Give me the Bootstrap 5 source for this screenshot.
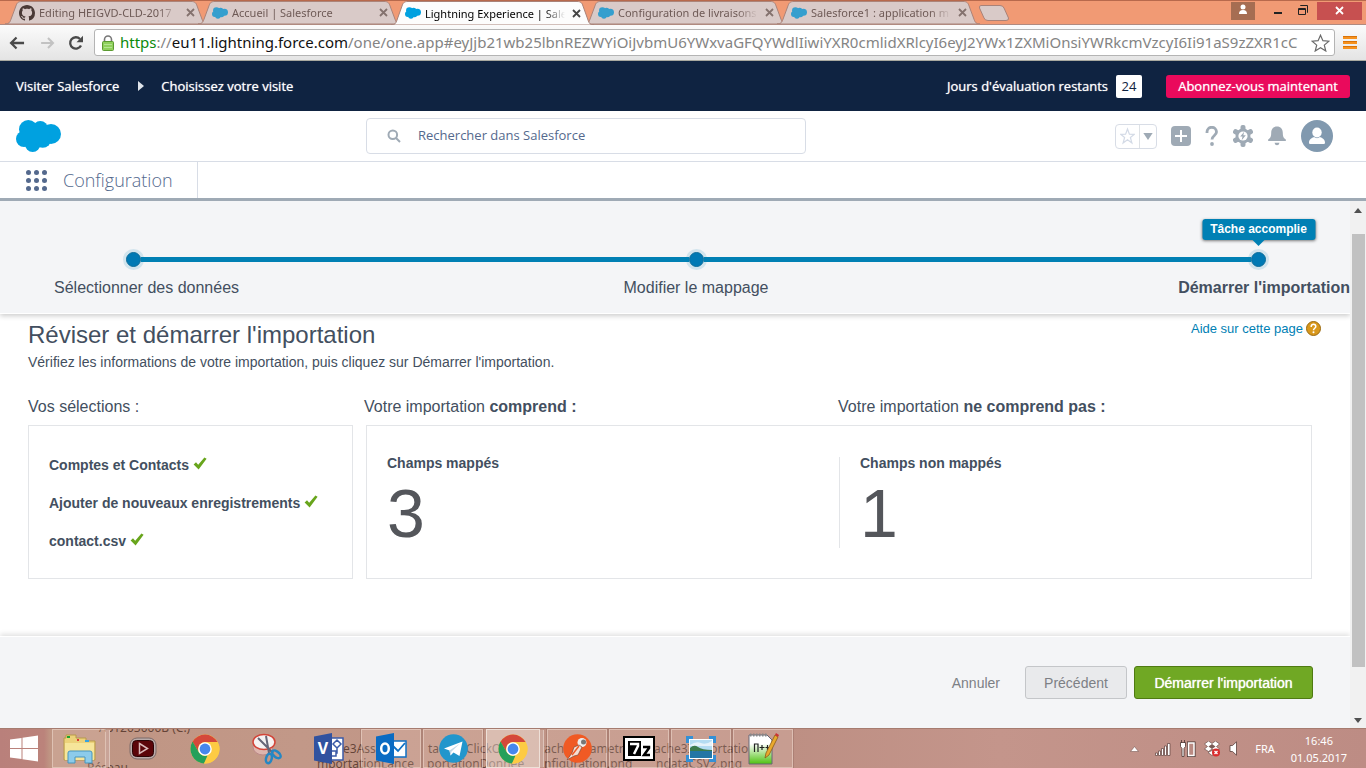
<!DOCTYPE html>
<html lang="fr">
<head>
<meta charset="utf-8">
<meta name="viewport" content="width=device-width, initial-scale=1">
<title>Lightning Experience | Salesforce</title>
<link href="https://cdn.jsdelivr.net/npm/bootstrap@5.3.0/dist/css/bootstrap.min.css" rel="stylesheet">
<style>
:root{--navy:#0f2341;--sf-blue:#00a1e0;--step:#0080b4;--ink:#434f60;--line:#d8dde6;--grey:#9faab5}
body{font-family:"Liberation Sans",Arial,sans-serif;font-size:14px;line-height:20px;color:var(--ink);background:#fff}
svg{display:block;flex:none}
button{border:0;padding:0;background:none;color:inherit}
a{text-decoration:none}
.ui-font{font-family:"Open Sans","Noto Sans",sans-serif}
.sys-font{font-family:"Noto Sans","Open Sans",sans-serif}

/* browser window */
.tabstrip{height:25px;background:#f19a74;border-top:1px solid #b8694c;border-bottom:1px solid #b08a80}
.tabs-row{padding-left:5px}
.btab{width:203px;height:23px;margin-right:-10px;padding:0 12px 0 14px;font-size:11px;line-height:23px;color:#6e5a56;position:relative}
.btab .shape{position:absolute;inset:0;width:100%;height:23px}
.btab > *{position:relative}
.btab .ttl{width:140px;margin-left:4px;color:inherit;white-space:nowrap;overflow:hidden;-webkit-mask-image:linear-gradient(90deg,#000 85%,transparent);mask-image:linear-gradient(90deg,#000 85%,transparent)}
.btab .closer{margin-left:7px;color:#84726e}
.btab.current{color:#000;z-index:2;height:24px}
.btab.current .closer{color:#444}
.btab.current .shape{height:24px}
.wbtn{height:19px}
.toolbar{height:36px;background:linear-gradient(#fbfbfb,#e4e4e4);border-bottom:1px solid #a9a9a0;padding:0 9px}
.address{height:27px;border:1px solid #b4b4b4;border-radius:3px;background:#fff;font-size:15px;line-height:25px;color:#848484;min-width:0;margin-left:10px;padding:0 4px 0 7px}
.address [role=textbox]{white-space:nowrap;overflow:hidden;outline:0;min-width:0;margin-left:6px}

/* salesforce chrome */
.tour{height:50px;background:var(--navy);color:#fff;padding:0 16px;font-size:13px;text-shadow:0 0 1px rgba(255,255,255,.8)}
.tour a{color:#fff}
.tour svg{margin:0 16px 0 18px}
.days{background:#fff;color:var(--navy);border-radius:2px;height:23px;width:26px;line-height:23px;text-shadow:none}
.subscribe{height:23px;width:184px;background:#ea0a5c;border-radius:3px;color:#fff;text-shadow:inherit}
.apphead{height:51px;border-bottom:1px solid var(--line);padding:0 33px 0 16px}
.logo{width:350px}
.tools{gap:14px}
.finder{width:440px;height:36px;border:1px solid var(--line);border-radius:4px;padding-left:20px}
.finder input{border:0;outline:0;font-size:13px;line-height:16px;color:#54698d;margin-left:16px;padding:0 2px 2px 1px}
.finder input::placeholder{color:#54698d;opacity:1}
.favs{border:1px solid var(--line);border-radius:4px;height:25px;width:42px}
.appnav{height:39px;border-bottom:3px solid var(--grey)}
.appnav .where{width:198px;border-right:1px solid var(--line);padding-left:26px;font-size:18px;font-weight:300;color:#54698d}

/* import wizard */
.band{background:#f4f5f7}
.steps{height:113px;border-bottom:1px solid #fff;box-shadow:0 2px 5px rgba(0,0,0,.2);padding-top:51px;position:relative}
.track{margin:0 84px 0 126px;height:15px}
.dot{width:15px;height:15px;border-radius:50%;background:#0079b4;border:1px solid #0b6c9a;box-shadow:0 0 0 3px rgba(0,128,180,.14);position:relative;z-index:1}
.seg{height:5px;background:var(--step)}
.tip{position:absolute;left:50%;bottom:26px;transform:translateX(-50%);background:var(--step);color:#fff;font-size:12px;font-weight:700;line-height:20px;height:21px;width:113px;padding-bottom:1px;bottom:18px;margin-bottom:8px;bottom:18px;text-align:center;border-radius:3px;box-shadow:0 1px 3px rgba(0,0,0,.5)}
.tip::after{content:"";position:absolute;left:50%;top:100%;margin-left:-6px;border:6px solid transparent;border-top-color:var(--step);border-bottom:0}
.names{display:grid;grid-template-columns:1fr auto 1fr;margin:11px 0 0 42px;padding-left:12px;font-size:16px;line-height:20px}
.names > :nth-child(2){margin-left:-12px}
.review{padding:7px 38px 0 28px}
.review h1{font-size:24px;line-height:28px;font-weight:400;margin:0 0 3px}
.help{color:var(--step);font-size:13px;line-height:16px;margin-right:-9px}
.help svg{margin-left:3px}
.sheet{display:grid;grid-template-columns:325px 1fr;column-gap:13px;margin-top:25px}
.sheet h2{font-size:16px;line-height:20px;font-weight:400;margin:0 0 8px}
.heads{margin-left:-2px}
.panel{border:1px solid #e3e5e8;height:154px}
.picks{padding:29px 20px;font-weight:700}
.picks li{height:38px}
.count{padding:0 20px;height:91px;line-height:14px}
.count b{display:block;line-height:12px}
.count + .count{border-left:1px solid #e3e5e8}
.count output{display:block;font-size:68px;line-height:68px;color:#54565b;margin-top:10px}
.actions{height:92px;border-top:1px solid #fff;box-shadow:0 -2px 5px rgba(0,0,0,.12);padding-right:37px}
.act{height:33px;border-radius:3px;font-size:14px;color:#7d8085}
.prev{width:102px;background:#e9eaec;border:1px solid #c4c6c9;margin:0 7px 0 25px}
.act.go{width:179px;background:#70a824;border:1px solid #4f7a12;color:#fff;text-shadow:0 0 1px #fff}
.vbar{width:16px;background:#f1f1f1;padding:7px 0 5px}
.vbar .thumb{width:13px;background:#c1c1c1;height:84%;margin-top:21px}

/* taskbar */
.taskbar{height:40px;background:linear-gradient(90deg,#b9807b 0,#bb837b 44px,#bf9583 50px,#c29888 300px,#bd8f83 780px,#c4958b 1000px,#bd8c84);border-top:1px solid #a67c70;position:relative;overflow:hidden}
.start{width:50px;padding-left:10px}
.slot{width:62px;height:39px;position:relative}
.slot.open{border:1px solid rgba(255,240,230,.4);background:rgba(255,230,215,.16);width:60px;margin:0 1px;box-shadow:0 0 0 1px rgba(120,80,70,.25)}
.slot.stack{width:54px;margin:0 6px 0 2px;box-shadow:4px 0 0 -1px #c9a498,5px 0 0 -1px #ddc4ba}
.slot.front{background:rgba(255,245,238,.42);border-color:#eee0d8}
.ghost{position:absolute;font-size:12px;line-height:16px;color:rgba(60,30,20,.7);white-space:nowrap}
.tray{color:#fff;font-size:11px;line-height:17px;padding-right:19px}
</style>
</head>
<body class="d-flex flex-column min-vh-100">

<svg width="0" height="0" class="position-absolute" aria-hidden="true">
  <symbol id="cloud" viewBox="0 0 135 96"><circle cx="37" cy="28" r="28"/><circle cx="73" cy="26" r="23"/><circle cx="105" cy="42" r="30"/><circle cx="24" cy="57" r="24"/><circle cx="50" cy="73" r="23"/><circle cx="80" cy="57" r="26"/><path d="M30 20h70v30l-40 20-30-5z"/></symbol>
  <symbol id="tabshape" viewBox="0 0 203 24" preserveAspectRatio="none"><path d="M0 24C4 24 5 22 6 19L11 5C12 2 13 .5 17 .5H186C190 .5 191 2 192 5L197 19C198 22 199 24 203 24Z"/></symbol>
  <symbol id="cross" viewBox="0 0 9 9"><path d="M1 1l7 7M8 1l-7 7" stroke="currentColor" stroke-width="1.8"/></symbol>
  <symbol id="tick" viewBox="0 0 14 13"><path d="M.6 7.500L3 5.200 5.200 7.800 11.400 .4 13.600 1.800 5.600 12.400Z" fill="#68a51c"/></symbol>
  <symbol id="chrome" viewBox="0 0 30 30"><circle cx="15" cy="15" r="14.5" fill="#fc4"/><path d="M2.5 7.7A14.5 14.5 0 0 1 27.6 8H15a7 7 0 0 0-6.2 10.200Z" fill="#d5483a"/><path d="M2.500 7.600L9 18.500A7 7 0 0 0 17.500 21.500L14 29.500A14.500 14.500 0 0 1 2.500 7.600Z" fill="#25a05a"/><path d="M27.600 8H15a7 7 0 0 1 6 10.500L14 29.500A14.500 14.500 0 0 0 27.600 8Z" fill="#fdcb43"/><circle cx="15" cy="15" r="6.800" fill="#fff"/><circle cx="15" cy="15" r="5.400" fill="#4787ed"/></symbol>
</svg>

<header class="sys-font">
  <div class="tabstrip d-flex align-items-start">
    <nav class="tabs-row d-flex" aria-label="Onglets">
      <div class="btab d-flex align-items-center"><svg class="shape" fill="#d9cac8" stroke="#a98278"><use href="#tabshape"/></svg>
        <svg width="16" height="16" viewBox="0 0 16 16" fill="#4b3a36"><path d="M8 0C3.580 0 0 3.580 0 8c0 3.540 2.290 6.530 5.470 7.590.4.070.55-.17.55-.38 0-.19-.01-.82-.01-1.490-2.010.37-2.530-.49-2.690-.94-.09-.23-.48-.94-.82-1.130-.28-.15-.68-.52-.01-.53.63-.01 1.080.58 1.230.82.72 1.210 1.870.87 2.330.66.07-.52.28-.87.51-1.070-1.780-.2-3.640-.89-3.640-3.950 0-.87.31-1.590.82-2.150-.08-.2-.36-1.020.08-2.120 0 0 .67-.21 2.200.82.64-.18 1.320-.27 2-.27s1.360.09 2 .27c1.530-1.040 2.200-.82 2.200-.82.44 1.100.16 1.920.08 2.120.51.56.82 1.270.82 2.150 0 3.070-1.870 3.750-3.650 3.950.29.25.54.73.54 1.480 0 1.070-.01 1.930-.01 2.200 0 .21.15.46.55.38A8.010 8.010 0 0 0 16 8c0-4.420-3.580-8-8-8z"/></svg>
        <a href="#" class="ttl">Editing HEIGVD-CLD-2017</a><button class="closer" aria-label="Fermer"><svg width="9" height="9"><use href="#cross"/></svg></button></div>
      <div class="btab d-flex align-items-center"><svg class="shape" fill="#d9cac8" stroke="#a98278"><use href="#tabshape"/></svg>
        <svg width="16" height="12" fill="#359fce"><use href="#cloud"/></svg><a href="#" class="ttl">Accueil | Salesforce</a><button class="closer" aria-label="Fermer"><svg width="9" height="9"><use href="#cross"/></svg></button></div>
      <div class="btab current d-flex align-items-center"><svg class="shape" fill="#fcfcfc" stroke="#a98278"><use href="#tabshape"/></svg>
        <svg width="16" height="12" fill="#00a1e0"><use href="#cloud"/></svg><a href="#" class="ttl">Lightning Experience | Sale</a><button class="closer" aria-label="Fermer"><svg width="9" height="9"><use href="#cross"/></svg></button></div>
      <div class="btab d-flex align-items-center"><svg class="shape" fill="#d9cac8" stroke="#a98278"><use href="#tabshape"/></svg>
        <svg width="16" height="12" fill="#359fce"><use href="#cloud"/></svg><a href="#" class="ttl">Configuration de livraisons</a><button class="closer" aria-label="Fermer"><svg width="9" height="9"><use href="#cross"/></svg></button></div>
      <div class="btab d-flex align-items-center"><svg class="shape" fill="#d9cac8" stroke="#a98278"><use href="#tabshape"/></svg>
        <svg width="16" height="12" fill="#359fce"><use href="#cloud"/></svg><a href="#" class="ttl">Salesforce1 : application m</a><button class="closer" aria-label="Fermer"><svg width="9" height="9"><use href="#cross"/></svg></button></div>
      <button class="ms-2 align-self-center" aria-label="Nouvel onglet"><svg width="32" height="16" viewBox="0 0 32 16"><path d="M3 .5H22Q25 .5 26 3L30.500 13Q31 15.500 28 15.500H10Q7 15.500 6 13L1.500 3Q1 .5 3 .5Z" fill="#d9cac8" stroke="#a98278"/></svg></button>
    </nav>
    <div class="d-flex ms-auto">
      <button class="wbtn" aria-label="Profil"><svg width="24" height="18" viewBox="0 0 24 18"><path fill="#a66d52" d="M0 0h24v18H0z"/><circle cx="12" cy="5" r="2.500" fill="#fff"/><path fill="#fff" d="M8 12q0-4 4-4t4 4z"/></svg></button>
      <button class="wbtn ms-3" aria-label="Réduire"><svg width="14" height="18" viewBox="0 0 14 18"><path fill="#222" d="M3 10h8v2H3z"/></svg></button>
      <button class="wbtn ms-2 ps-1" aria-label="Restaurer"><svg width="12" height="18" viewBox="0 0 12 18" fill="none" stroke="#222"><path d="M1.500 6.500h7v6h-7zM1 7.500h8M3.500 4V3.500h7v7H10"/></svg></button>
      <button class="wbtn ms-2 me-1" aria-label="Fermer la fenêtre"><svg width="45" height="18" viewBox="0 0 45 18"><path fill="#c75050" d="M0 0h45v18H0z"/><path d="M19 5l7 7M26 5l-7 7" stroke="#fff" stroke-width="1.800"/></svg></button>
    </div>
  </div>
  <div class="toolbar d-flex align-items-center">
    <button aria-label="Précédent"><svg width="16" height="14" viewBox="0 0 17 14" fill="none" stroke="#4a4a4a" stroke-width="2.400"><path d="M16 7H2.500M8 1.200L2.200 7 8 12.800"/></svg></button>
    <button class="ms-3 me-3" aria-label="Suivant"><svg width="14" height="12" viewBox="0 0 16 14" fill="none" stroke="#c2c2c2" stroke-width="2.400"><path d="M0 7h13.500M8 1.200L13.800 7 8 12.800"/></svg></button>
    <button style="margin-left:-3px" aria-label="Actualiser"><svg width="16" height="16" viewBox="0 0 16 16"><path d="M13 10.500A5.700 5.700 0 1 1 12 4" fill="none" stroke="#4a4a4a" stroke-width="2.300"/><path d="M15 .8v6.500H8.500z" fill="#4a4a4a"/></svg></button>
    <div class="address d-flex align-items-center flex-grow-1">
      <svg width="12" height="16" viewBox="0 0 12 16"><path d="M2.500 7V4.500a3.500 3.500 0 0 1 7 0V7" fill="none" stroke="#777" stroke-width="1.600"/><rect x=".5" y="6.500" width="11" height="9" rx="1" fill="#8fd05c" stroke="#5b9a31"/><path d="M2 9.500h8M2 12.500h8" stroke="#b4e592"/></svg>
      <div role="textbox" aria-label="Adresse" contenteditable="true" spellcheck="false" class="flex-grow-1"><span style="color:#0b8a0b">https</span>://<span style="color:#111">eu11.lightning.force.com</span>/one/one.app#eyJjb21wb25lbnREZWYiOiJvbmU6YWxvaGFQYWdlIiwiYXR0cmlidXRlcyI6eyJ2YWx1ZXMiOnsiYWRkcmVzcyI6Ii91aS9zZXR1cC</div>
      <button aria-label="Favori"><svg width="19" height="18" viewBox="0 0 19 18"><path d="M9.500 1.200l2.400 5.500 6 .5-4.600 3.900 1.500 5.900-5.300-3.200L4.200 17l1.500-5.900L1.100 7.200l6-.5z" fill="#fff" stroke="#6a6a6a" stroke-width="1.200"/></svg></button>
    </div>
    <button class="ms-2" aria-label="Menu"><svg width="14" height="13" viewBox="0 0 14 13"><path fill="#f6921e" d="M0 0h14v3H0zM0 5h14v3H0zM0 10h14v3H0z"/><path fill="#d9730a" d="M0 0h14v1H0zM0 5h14v1H0zM0 10h14v1H0z"/></svg></button>
  </div>
</header>

<div class="tour ui-font d-flex align-items-center">
  <a href="#">Visiter Salesforce</a>
  <svg width="8" height="10" viewBox="0 0 8 10" fill="#dfe4ea"><path d="M1 0l6 5-6 5z"/></svg>
  <a href="#">Choisissez votre visite</a>
  <span class="ms-auto me-2">Jours d'évaluation restants</span>
  <span class="days text-center">24</span>
  <button class="subscribe ms-4">Abonnez-vous maintenant</button>
</div>

<div class="apphead ui-font d-flex align-items-center">
  <div class="logo"><svg width="45" height="32" fill="#00a1e0"><use href="#cloud"/></svg></div>
  <label class="finder d-flex align-items-center"><svg width="14" height="14" viewBox="0 0 14 14" fill="none" stroke="#9faab5" stroke-width="2"><circle cx="5.800" cy="5.800" r="4.300"/><path d="M9 9l4 4"/></svg>
    <input type="text" class="ui-font flex-grow-1" placeholder="Rechercher dans Salesforce" aria-label="Rechercher dans Salesforce"></label>
  <div class="tools d-flex align-items-center ms-auto">
    <div class="favs d-flex align-items-center">
      <button class="ps-1 pe-1 border-end" aria-label="Favoris"><svg width="15" height="23" viewBox="0 0 15 23"><path d="M7.500 4l1.900 5.200 5 .1-4 3.200 1.500 5.500-4.400-3.200L3.100 18l1.500-5.500-4-3.200 5-.1z" fill="#fff" stroke="#d3dae6" stroke-width="1.200"/></svg></button>
      <button class="flex-grow-1 d-flex justify-content-center" aria-label="Liste des favoris"><svg width="10" height="7" viewBox="0 0 8 6"><path d="M0 0h8L4 6z" fill="#9faab5"/></svg></button>
    </div>
    <button aria-label="Créer"><svg width="20" height="20" viewBox="0 0 20 20"><rect width="20" height="20" rx="4" fill="#9faab5"/><path d="M10 4v12M4 10h12" stroke="#fff" stroke-width="2"/></svg></button>
    <button aria-label="Aide"><svg width="14" height="20" viewBox="0 0 14 20"><path d="M2 7V6a4.700 4.700 0 0 1 9.500 0c0 3.500-4.500 3.500-4.500 7.500" fill="none" stroke="#9faab5" stroke-width="2.800"/><circle cx="7" cy="18" r="1.900" fill="#9faab5"/></svg></button>
    <button aria-label="Configuration"><svg width="20" height="22" viewBox="0 0 20 22" fill="#9faab5"><circle cx="10" cy="11" r="7.500"/><rect x="7.500" y="0" width="5" height="22" rx="2"/><rect x="7.500" y="0" width="5" height="22" rx="2" transform="rotate(60 10 11)"/><rect x="7.500" y="0" width="5" height="22" rx="2" transform="rotate(120 10 11)"/><circle cx="10" cy="11" r="4.600" fill="#fff"/><path d="M11.200 6.800L7.200 11.500h2.300L8.700 15.200l4.100-4.900h-2.500z"/></svg></button>
    <button aria-label="Notifications"><svg width="20" height="20" viewBox="0 0 20 20" fill="#9faab5"><path d="M10 .5C6.300.5 4.200 3 4.200 6.800c0 4-.9 5.200-2.700 6.400-.8.600-.7 1.800.3 1.800h16.400c1 0 1.100-1.200.3-1.800-1.800-1.200-2.700-2.400-2.700-6.400C15.800 3 13.700.5 10 .5zM7.500 16.800h5q-.5 2.500-2.500 2.500t-2.500-2.500z"/></svg></button>
    <button aria-label="Profil utilisateur"><svg width="32" height="32" viewBox="0 0 32 32"><circle cx="16" cy="16" r="16" fill="#8199af"/><ellipse cx="16" cy="12.500" rx="4.700" ry="5" fill="#fff"/><path d="M8 22.500c0-3 2.500-4.500 5-5.500 2 1.500 4 1.500 6 0 2.500 1 5 2.500 5 5.500 0 1-.6 1.500-1.500 1.500h-13C8.600 24 8 23.500 8 22.500z" fill="#fff"/></svg></button>
  </div>
</div>

<nav class="appnav d-flex ui-font">
  <div class="where d-flex align-items-center"><button aria-label="Lanceur d'applications"><svg width="21" height="21" viewBox="0 0 21 21" fill="#54698d"><circle cx="2.500" cy="2.500" r="2.500"/><circle cx="10.500" cy="2.500" r="2.500"/><circle cx="18.500" cy="2.500" r="2.500"/><circle cx="2.500" cy="10.500" r="2.500"/><circle cx="10.500" cy="10.500" r="2.500"/><circle cx="18.500" cy="10.500" r="2.500"/><circle cx="2.500" cy="18.500" r="2.500"/><circle cx="10.500" cy="18.500" r="2.500"/><circle cx="18.500" cy="18.500" r="2.500"/></svg></button><span class="ms-3">Configuration</span></div>
</nav>

<div class="d-flex flex-grow-1">
  <main class="d-flex flex-column flex-grow-1 overflow-hidden">
    <section class="steps band">
      <div class="track d-flex align-items-center">
        <span class="dot"></span><span class="seg flex-grow-1"></span><span class="dot"></span><span class="seg flex-grow-1"></span><span class="dot"><span class="tip">Tâche accomplie</span></span>
      </div>
      <div class="names"><span>Sélectionner des données</span><span>Modifier le mappage</span><strong class="text-end">Démarrer l'importation</strong></div>
    </section>
    <section class="review flex-grow-1">
      <div class="d-flex justify-content-between">
        <div><h1>Réviser et démarrer l'importation</h1><p class="mb-0">Vérifiez les informations de votre importation, puis cliquez sur Démarrer l'importation.</p></div>
        <a href="#" class="help d-flex align-self-start"><span>Aide sur cette page</span><svg width="15" height="15" viewBox="0 0 15 15"><circle cx="7.500" cy="7.500" r="7" fill="#d9981c" stroke="#9a6a10"/><path d="M5.200 6V5.500a2.300 2.300 0 0 1 4.600 0C9.800 7.300 7.500 7.200 7.500 9.200" fill="none" stroke="#fff" stroke-width="1.500"/><circle cx="7.500" cy="11.300" r="1" fill="#fff"/></svg></a>
      </div>
      <div class="sheet">
        <div><h2>Vos sélections :</h2>
          <ul class="panel picks list-unstyled mb-0"><li>Comptes et Contacts <svg class="d-inline-block align-baseline" width="14" height="13"><use href="#tick"/></svg></li><li>Ajouter de nouveaux enregistrements <svg class="d-inline-block align-baseline" width="14" height="13"><use href="#tick"/></svg></li><li>contact.csv <svg class="d-inline-block align-baseline" width="14" height="13"><use href="#tick"/></svg></li></ul></div>
        <div><div class="heads d-flex"><h2 class="w-50">Votre importation <b>comprend :</b></h2><h2 class="w-50">Votre importation <b>ne comprend pas :</b></h2></div>
          <div class="panel d-flex align-items-center"><div class="count w-50"><b>Champs mappés</b><output>3</output></div><div class="count w-50"><b>Champs non mappés</b><output>1</output></div></div></div>
      </div>
    </section>
    <section class="actions band d-flex align-items-center justify-content-end">
      <button class="act">Annuler</button><button class="act prev">Précédent</button><button class="act go">Démarrer l'importation</button>
    </section>
  </main>
  <div class="vbar d-flex flex-column align-items-center flex-shrink-0" aria-hidden="true">
    <svg width="8" height="5" viewBox="0 0 8 5" fill="#505050"><path d="M4 0l4 5H0z"/></svg><div class="thumb"></div><svg class="mt-auto" width="8" height="5" viewBox="0 0 8 5" fill="#505050"><path d="M0 0h8L4 5z"/></svg>
  </div>
</div>

<footer class="taskbar sys-font d-flex align-items-center">
  <span class="ghost" style="left:99px;top:-9px">AS1203000B (C:)</span><span class="ghost" style="left:87px;top:31px">Réseau</span>
  <span class="ghost" style="left:343px;top:12px">e3Assi</span><span class="ghost" style="left:317px;top:27px">mportationLance</span>
  <span class="ghost" style="left:428px;top:12px">tache3ClickO</span><span class="ghost" style="left:427px;top:27px">portationDonnee</span>
  <span class="ghost" style="left:540px;top:12px">tacheParametreC</span><span class="ghost" style="left:544px;top:27px">nfiguration.png</span>
  <span class="ghost" style="left:654px;top:12px">ache3Importatio</span><span class="ghost" style="left:656px;top:27px">ndataCSV2.png</span>
  <button class="start position-relative" aria-label="Démarrer"><svg width="28" height="27" viewBox="0 0 28 27" fill="#fff"><path d="M0 4.500L11.500 3v10H0zM12.500 2.800L28 .5V13H12.500zM0 14h11.500v10L0 22.500zM12.500 14H28v12.500L12.500 24.200z"/></svg></button>
  <button class="slot open stack d-flex align-items-center justify-content-center" aria-label="Explorateur"><svg width="33" height="30" viewBox="0 0 33 30"><path d="M3 1h10v3h10v3h9v19H1V4h2z" fill="#ecd27a" stroke="#b79a4a"/><path d="M2 9h29v17H2z" fill="#f6e59a"/><path d="M4 2h3v2H4z" fill="#1da32f"/><path d="M14 5h2v2h-2z" fill="#d33"/><path d="M22 6h4v2h-4z" fill="#37a3df"/><path d="M5 29V19q0-2 2-2h20q2 0 2 2v10h-7v-6H12v6z" fill="#8ccbea" stroke="#4795bd"/></svg></button>
  <button class="slot d-flex align-items-center justify-content-center" aria-label="Lecteur"><svg width="28" height="24" viewBox="0 0 28 24"><rect x="1" y="1" width="26" height="21" rx="7" fill="#b9aaa8" stroke="#7c6a68"/><rect x="3.500" y="3.500" width="21" height="16" rx="4" fill="#5b0509" stroke="#2a0506"/><path d="M10.500 6.500l8 5-8 5z" fill="none" stroke="#d9b8b8" stroke-width="1.500"/></svg></button>
  <button class="slot d-flex align-items-center justify-content-center" aria-label="Chrome"><svg width="30" height="30"><use href="#chrome"/></svg></button>
  <button class="slot d-flex align-items-center justify-content-center" aria-label="Outil Capture"><svg width="30" height="32" viewBox="0 0 30 32"><ellipse cx="11" cy="14" rx="10" ry="8" fill="#ddb5ad" stroke="#b88"/><ellipse cx="12" cy="9" rx="11" ry="7.500" fill="#f5f2f2" stroke="#d34438" stroke-width="1.500"/><path d="M6 5l15 15M14 3l3 17" stroke="#667" stroke-width="2"/><ellipse cx="17" cy="25.500" rx="2.800" ry="4.800" fill="none" stroke="#2587c4" stroke-width="2.500" transform="rotate(15 17 25)"/><ellipse cx="24" cy="21.500" rx="2.800" ry="5" fill="none" stroke="#2587c4" stroke-width="2.500" transform="rotate(-50 24 21)"/></svg></button>
  <button class="slot d-flex align-items-center justify-content-center" aria-label="Visio"><svg width="30" height="32" viewBox="0 0 30 32"><path d="M15 5h14v22H15z" fill="#fff" stroke="#3b5ba8" stroke-width="1.500"/><path d="M23 7l4 4-4 4-4-4zM17 18h5v5h-5zM23 15v5h-1" fill="none" stroke="#3b5ba8" stroke-width="1.500"/><path d="M0 3.500L18 0v31L0 27.500z" fill="#31529f"/><text x="9" y="21" font-size="16" font-weight="700" text-anchor="middle" fill="#fff">V</text></svg></button>
  <button class="slot open d-flex align-items-center justify-content-center" aria-label="Outlook"><svg width="31" height="32" viewBox="0 0 31 32"><path d="M15 8h15v16H15z" fill="#fff" stroke="#0f70c4" stroke-width="1.500"/><path d="M17 13l5 5 7-8" fill="none" stroke="#0f70c4" stroke-width="1.800"/><path d="M0 3.500L18 0v31L0 27.500z" fill="#0a6bc3"/><ellipse cx="9" cy="15.500" rx="3.800" ry="5" fill="none" stroke="#fff" stroke-width="2.500"/></svg></button>
  <button class="slot open d-flex align-items-center justify-content-center" aria-label="Telegram"><svg width="29" height="29" viewBox="0 0 29 29"><circle cx="14.500" cy="14.500" r="14.300" fill="#2296cc"/><path d="M5 14.500L23.500 7.500 20.500 22 14.500 18.500 11.500 21.500 10.500 16.500z" fill="#fff"/><path d="M10.500 16.500L21 9.500 12.500 17.500 11.500 21.500z" fill="#c3d8e6"/></svg></button>
  <button class="slot open stack front d-flex align-items-center justify-content-center" aria-label="Chrome, fenêtre active"><svg width="30" height="30"><use href="#chrome"/></svg></button>
  <button class="slot open d-flex align-items-center justify-content-center" aria-label="Postman"><svg width="29" height="29" viewBox="0 0 29 29"><circle cx="14.500" cy="14.500" r="14.300" fill="#f05a24"/><circle cx="19" cy="8.500" r="4.500" fill="#eee"/><circle cx="20.500" cy="8" r="2.500" fill="#777"/><path d="M16 11l3 2-4 8-4 1-7 4 5-7 2-6z" fill="#f6ddd2" stroke="#7d4a38" stroke-width=".7"/><path d="M16 12L9 21" stroke="#f05a24" stroke-width="1.500"/></svg></button>
  <button class="slot open d-flex align-items-center justify-content-center" aria-label="7-Zip"><svg width="32" height="25" viewBox="0 0 32 25"><path d="M1 1h30v23H1z" fill="#fff" stroke="#000" stroke-width="2"/><path d="M5 5h13v15H5z"/><path d="M7 8h8v2l-4 8" fill="none" stroke="#fff" stroke-width="2.500"/><path d="M20 11h6v1l-5 7h6" fill="none" stroke="#000" stroke-width="2.500"/></svg></button>
  <button class="slot open d-flex align-items-center justify-content-center" aria-label="Photos"><svg width="30" height="26" viewBox="0 0 30 26"><path d="M3 3h24v20H3z" fill="#fff"/><path d="M4 4h22v10H4z" fill="#b5dcf2"/><path d="M4 9q6-4 11-2t11-2v5H4z" fill="#e6f2fa"/><path d="M4 12q4-4 8-1t14 3v2H4z" fill="#3c7a4d"/><path d="M4 15h22v7H4z" fill="#2476a5"/><path d="M1.500 7V1.500H7M23 1.500h5.500V7M28.500 19v5.500H23M7 24.500H1.500V19" fill="none" stroke="#3490d6" stroke-width="3"/></svg></button>
  <button class="slot open d-flex align-items-center justify-content-center" aria-label="Notepad++"><svg width="31" height="32" viewBox="0 0 31 32"><defs><linearGradient id="np" x2="0" y2="1"><stop offset=".3" stop-color="#fff"/><stop offset="1" stop-color="#4ec20f"/></linearGradient></defs><path d="M1 2h18l5 5v24H1z" fill="url(#np)" stroke="#667"/><path d="M2 2h17" stroke="#888" stroke-width="3" stroke-dasharray="1.500 1.500"/><path d="M6.500 19v-8h3.500v8M11.500 14.500h5M14 12v5M17.500 14.500h4M19.500 12v5" fill="none" stroke="#222" stroke-width="1.200"/><path d="M17 25l1-5L27 2l3 2-9 18z" fill="#e9a92c" stroke="#8a5a18" stroke-width=".8"/><path d="M27 2l1-2 3 2-1 2z" fill="#c33"/></svg></button>
  <div class="tray d-flex align-items-center ms-auto">
    <svg width="9" height="6" viewBox="0 0 9 6"><path d="M4.500 .5L8.500 5.500h-8z" fill="#fff" stroke="#7a5a55" stroke-width=".6"/></svg>
    <svg class="ms-3" width="16" height="14" viewBox="0 0 16 14" fill="#fff" stroke="#5b3f3b" stroke-width=".7"><path d="M.5 11h2v2.500h-2zM3.500 9h2v4.500h-2zM6.500 6.500h2v7h-2zM9.500 4h2v9.500h-2zM12.500 1.500h2.500v12h-2.500z"/></svg>
    <svg class="ms-2" width="17" height="17" viewBox="0 0 17 17"><path d="M1.500 2.500h5v4l-1.500 2v8H3v-8l-1.500-2zM2.500 0v3M5.500 0v3" fill="#fff" stroke="#4b3531" stroke-width=".8"/><rect x="9.500" y="3" width="5.500" height="12.500" fill="none" stroke="#4b3531" stroke-width="3"/><rect x="9.500" y="3" width="5.500" height="12.500" fill="#ba8a82" stroke="#fff" stroke-width="1.500"/></svg>
    <svg class="ms-2" width="17" height="16" viewBox="0 0 17 16"><path d="M4.500 0L8 2.500 11.500 0 15.500 3 12.500 5.500 15.500 8 11.500 10.500 8 8 4.500 10.500.5 8l3-2.500L.5 3zM4 11.500L8 9.500l4 2L8 14.500z" fill="#fff" stroke="#5b3f3b" stroke-width=".6"/><path d="M8 3l3.500 2.500L8 8 4.500 5.500z" fill="#7a5a55"/><circle cx="12" cy="11.500" r="4" fill="#d92c2c"/><path d="M10.500 10l3 3M13.500 10l-3 3" stroke="#fff" stroke-width="1.300"/></svg>
    <svg class="ms-2" width="10" height="15" viewBox="0 0 10 15"><path d="M1 4.500h2.500L7.500.8v13.400L3.500 10.500H1z" fill="#fff" stroke="#5b3f3b" stroke-width=".8"/></svg>
    <span class="ms-3 me-3">FRA</span>
    <time class="text-center">16:46<br>01.05.2017</time>
  </div>
</footer>
<script src="https://cdn.jsdelivr.net/npm/bootstrap@5.3.0/dist/js/bootstrap.bundle.min.js"></script>
</body>
</html>
